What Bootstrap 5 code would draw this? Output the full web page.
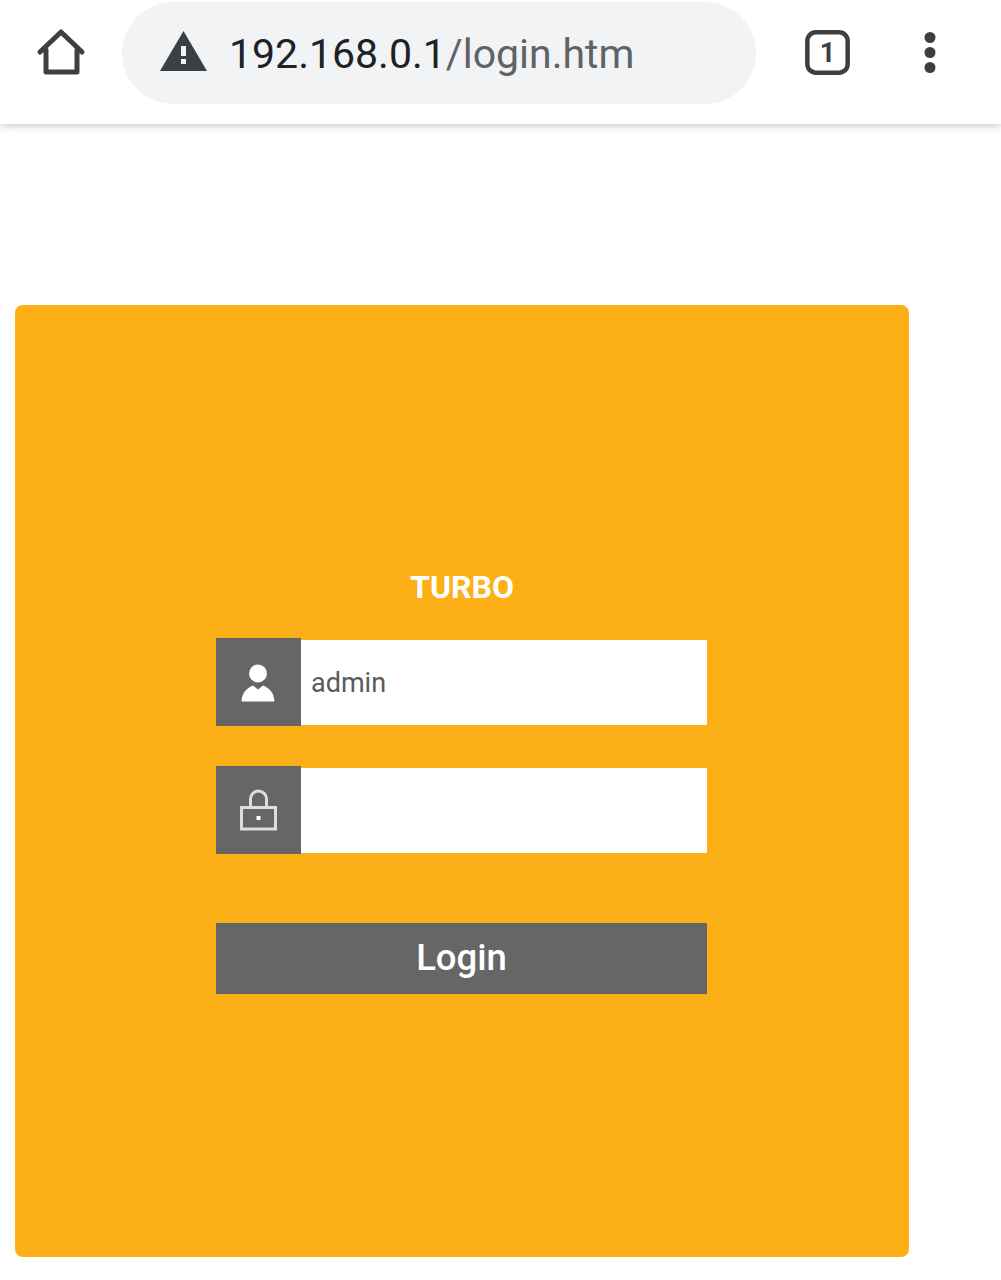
<!DOCTYPE html>
<html lang="en">
  <head>
    <meta charset="UTF-8" />
    <meta name="viewport" content="width=device-width, initial-scale=1" />
    <title>Login</title>
    <link href="https://cdn.jsdelivr.net/npm/bootstrap@5.3.3/dist/css/bootstrap.min.css" rel="stylesheet" />
    <style>
      body { font-family: Roboto, "Liberation Sans", sans-serif; background: #fff; }
      .chrome-bar { height: 124px; padding: 2px 0 0 36px; background: #fff; box-shadow: 0 2px 8px rgba(60, 64, 67, .28); }
      .home-btn { width: 50px; height: 50px; margin-top: 26px; }
      .url-pill { width: 634px; height: 102px; margin-left: 36px; padding-left: 38px; background: #f1f3f4; border-radius: 51px; }
      .warn-icon { margin-bottom: 5px; }
      .url-text { margin: 3px 0 0 22px; font-size: 41px; color: #202124; }
      .url-path { color: #5f6368; }
      .tab-btn { width: 45px; height: 45px; margin: 28px 0 0 49px; }
      .dots-btn { width: 14px; height: 41px; margin: 30px 0 0 73px; }
      .login-panel { width: 894px; height: 952px; margin: 181px 0 0 15px; padding-top: 263px; background: #fcaf17; border-radius: 8px; }
      .panel-title { margin-bottom: 32px; font-size: 32px; line-height: 38px; font-weight: 700; color: #fff; text-align: center; }
      .login-form { width: 491px; margin-left: 201px; }
      .field-row { height: 88px; margin-bottom: 40px; }
      .field-row .input-group-text { width: 85px; height: 88px; padding: 0; justify-content: center; background: #666; border: 0; border-radius: 0; }
      .field-row .form-control { height: 85px; margin-top: 2px; margin-left: 0 !important; padding: 0 10px; font-size: 27px; color: #5a5a5a; background: #fff; border: 0; border-radius: 0 !important; box-shadow: none; }
      .person-icon { margin: 2px 1px 0 0; }
      .login-btn { height: 71px; margin-top: 69px; padding: 0; font-size: 36.500px; font-weight: 500; line-height: 1; color: #fff; background: #666; border: 0; border-radius: 0; }
      .login-btn:hover { color: #fff; background: #666; }
    </style>
  </head>
  <body>
    <div class="chrome-bar d-flex align-items-start">
      <svg class="home-btn flex-shrink-0" viewBox="0 0 50 50" aria-hidden="true">
        <path d="M4 24 25 4l21 20M10 22v22h31V22" fill="none" stroke="#3c4043" stroke-width="5" stroke-linecap="round" stroke-linejoin="round" />
      </svg>
      <div class="url-pill d-flex align-items-center flex-shrink-0">
        <svg class="warn-icon flex-shrink-0" width="47" height="40" viewBox="0 0 47 40" aria-hidden="true">
          <path d="M23.500 0 47 40H0Z" fill="#3c4043" />
          <rect x="21" y="15" width="5" height="10" fill="#f1f3f4" />
          <rect x="21" y="28" width="5" height="5" fill="#f1f3f4" />
        </svg>
        <span class="url-text">192.168.0.1<span class="url-path">/login.htm</span></span>
      </div>
      <svg class="tab-btn flex-shrink-0" viewBox="0 0 48 48" aria-hidden="true">
        <rect x="2.500" y="2.500" width="43" height="43" rx="9" fill="none" stroke="#3c4043" stroke-width="4.800" />
        <text x="24" y="34.500" text-anchor="middle" font-family="Roboto, sans-serif" font-size="29" font-weight="700" fill="#3c4043">1</text>
      </svg>
      <svg class="dots-btn flex-shrink-0" viewBox="0 0 14 41" aria-hidden="true">
        <circle cx="7" cy="5.500" r="5.500" fill="#3c4043" />
        <circle cx="7" cy="20.500" r="5.500" fill="#3c4043" />
        <circle cx="7" cy="35.500" r="5.500" fill="#3c4043" />
      </svg>
    </div>

    <div class="login-panel">
      <div class="panel-title">TURBO</div>
      <form class="login-form">
        <div class="field-row input-group flex-nowrap">
          <span class="input-group-text">
            <svg class="person-icon" width="34" height="38" viewBox="0 0 34 38" aria-hidden="true">
              <circle cx="17" cy="9.500" r="9" fill="#fff" />
              <path d="M0.500 37.500C1 28 6 24 12 21.500L17 25.500 22 21.500C28 24 33 28 33.500 37.500Z" fill="#fff" />
            </svg>
          </span>
          <input type="text" class="form-control" value="admin" aria-label="Username" />
        </div>
        <div class="field-row input-group flex-nowrap">
          <span class="input-group-text">
            <svg width="38" height="42" viewBox="0 0 38 42" aria-hidden="true">
              <rect x="1.500" y="18.500" width="34" height="21.500" fill="none" stroke="#ddd" stroke-width="3" />
              <path d="M10.500 18.500V10a8 8 0 0 1 16 0V18.500" fill="none" stroke="#ddd" stroke-width="3" />
              <rect x="16.500" y="27" width="4" height="4" fill="#fff" />
            </svg>
          </span>
          <input type="password" class="form-control" aria-label="Password" />
        </div>
        <button type="button" class="login-btn btn w-100 d-block">Login</button>
      </form>
    </div>
  </body>
</html>
